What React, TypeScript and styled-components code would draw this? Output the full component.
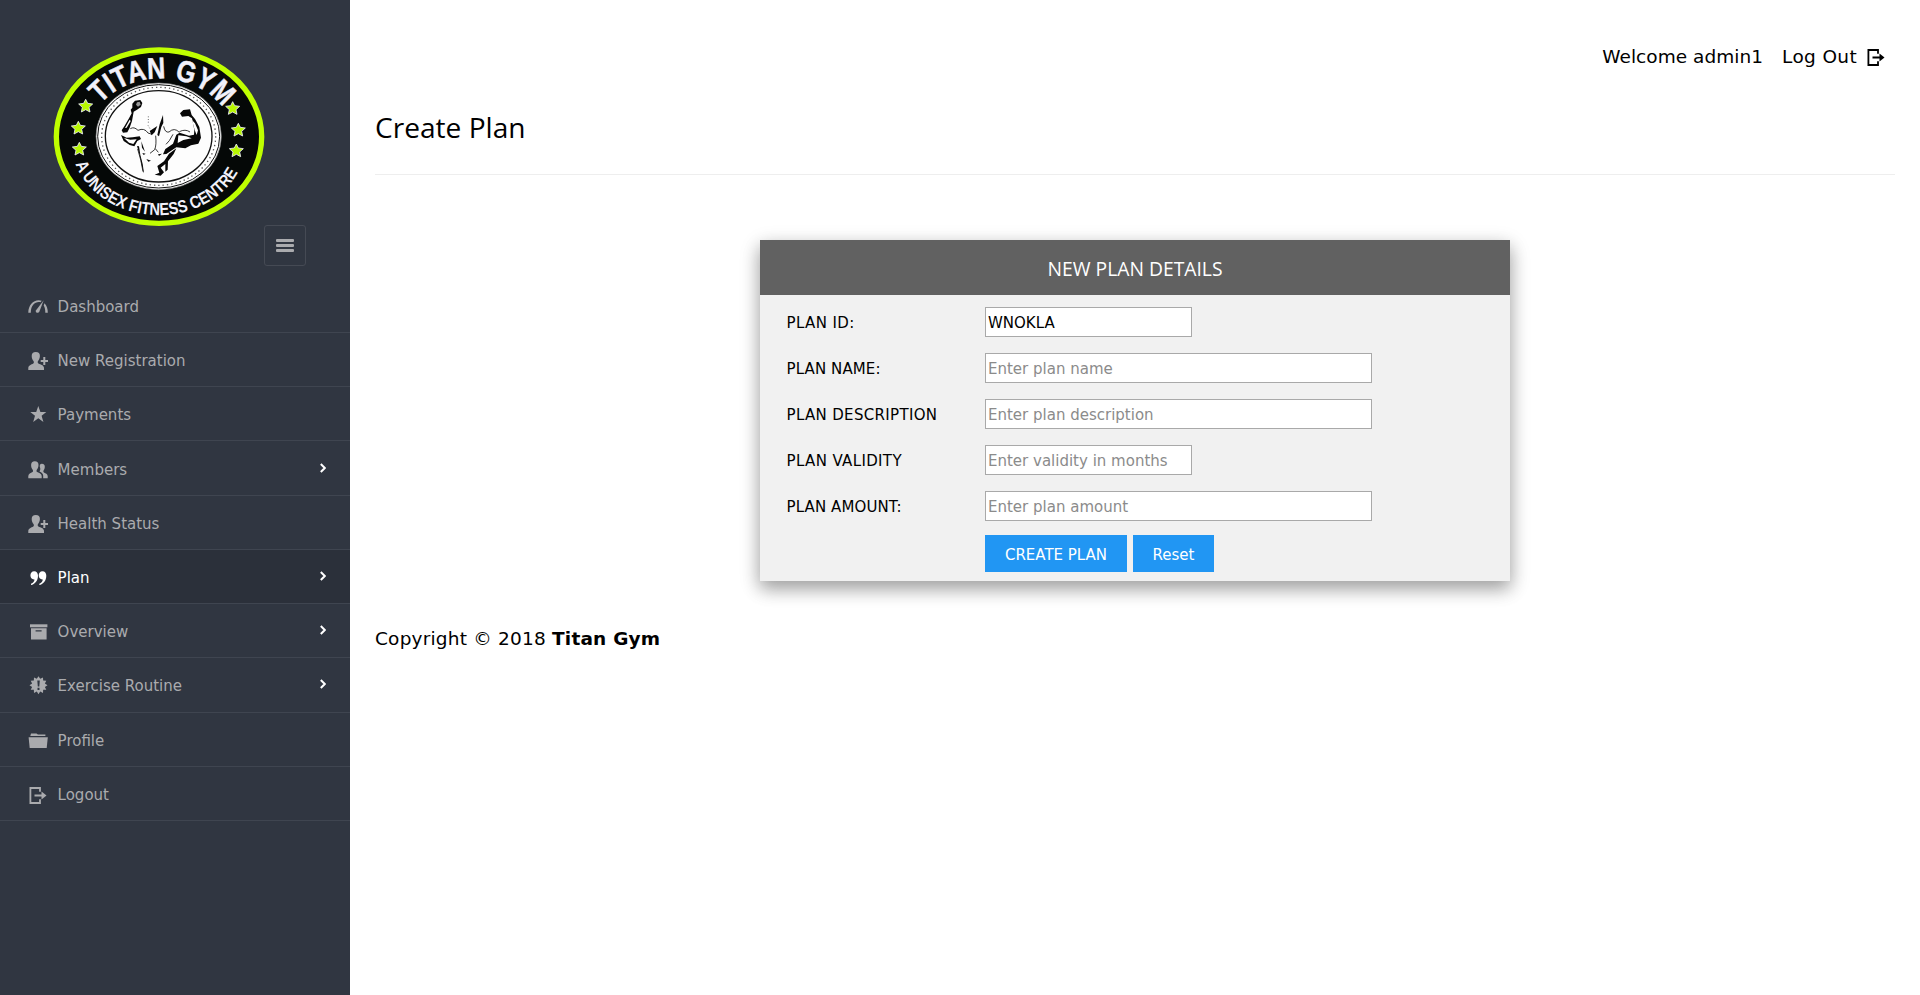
import React from 'react';
import styled, { createGlobalStyle } from 'styled-components';

const GlobalStyle = createGlobalStyle`
  *, *::before, *::after { box-sizing: border-box; }
  body {
    margin: 0;
    background: #fff;
    color: #000;
    font-family: Verdana, 'DejaVu Sans', sans-serif;
    font-size: 15px;
  }
`;

const Page = styled.div`
  display: flex;
  min-height: 995px;
`;

const Sidebar = styled.aside`
  width: 350px;
  flex: none;
  background: #303641;
`;

const SidebarHeader = styled.header`
  display: flex;
  align-items: flex-start;
  height: 278.78px;
  padding: 45px 0 0 52px;
`;

const Logo = styled.svg`
  width: 212px;
  height: 183px;
  overflow: visible;
`;

const MenuToggle = styled.button`
  display: flex;
  flex-direction: column;
  align-items: center;
  justify-content: center;
  gap: 2px;
  width: 42px;
  height: 41px;
  margin: 180px 0 0;
  padding: 0;
  border: 1px solid #454a54;
  border-radius: 3px;
  background: transparent;
`;

const MenuBar = styled.span`
  width: 18px;
  height: 3px;
  border-radius: 1px;
  background: #aaabae;
`;

const Nav = styled.nav`
  display: flex;
  flex-direction: column;
`;

const NavItem = styled.a<{ $active?: boolean }>`
  display: flex;
  align-items: center;
  height: 54.22px;
  padding: 3px 24px 0 28px;
  border-bottom: 1px solid #3f4550;
  background: ${(p) => (p.$active ? '#2b303a' : 'transparent')};
  color: ${(p) => (p.$active ? '#fff' : '#aaabae')};
`;

const NavLabel = styled.span`
  flex: 1;
  margin-left: 9.6px;
`;

const NavIcon = styled.svg`
  width: 20px;
  height: 20px;
  flex: none;
  fill: currentColor;
`;

const Chevron = styled.svg`
  width: 6px;
  height: 10px;
  margin-bottom: 4px;
  fill: none;
  stroke: #fff;
  stroke-width: 2;
`;

const Main = styled.main`
  flex: 1;
  padding: 0 25px;
`;

const TopBar = styled.div`
  display: flex;
  justify-content: flex-end;
  align-items: center;
  height: 74px;
  padding: 40px 9px 0 0;
  font-size: 18.5px;
  line-height: 34px;
`;

const Welcome = styled.span`
  margin-right: 19px;
  letter-spacing: 0.04px;
`;

const LogoutLink = styled.a`
  display: flex;
  align-items: center;
  gap: 9px;
  letter-spacing: 0.35px;
`;

const PageTitle = styled.h3`
  height: 101px;
  margin: 0;
  padding-top: 33px;
  border-bottom: 1px solid #eee;
  font: 400 28.1px/40px 'Segoe UI', 'Open Sans', sans-serif;
`;

const Card = styled.section`
  width: 750px;
  height: 341px;
  margin: 65px auto 0;
  background: #f1f1f1;
  box-shadow: 0 8px 16px rgba(0, 0, 0, 0.24), 0 6px 20px rgba(0, 0, 0, 0.2);
`;

const CardHeader = styled.h4`
  height: 55px;
  margin: 0;
  padding-top: 1px;
  background: #616161;
  color: #fff;
  font: 400 19.3px/56px 'Segoe UI', 'Open Sans', sans-serif;
  text-align: center;
`;

const Form = styled.form`
  display: flex;
  flex-direction: column;
  gap: 16px;
  padding: 12px 26px 0;
`;

const Field = styled.label`
  display: flex;
  align-items: center;
  height: 30px;
`;

const FieldLabel = styled.span<{ $spacing: number }>`
  width: 199px;
  padding: 2px 0 0 0.6px;
  letter-spacing: ${(p) => p.$spacing}px;
`;

const Input = styled.input<{ $wide?: boolean }>`
  width: ${(p) => (p.$wide ? 387 : 207)}px;
  height: 30px;
  padding: 2px 2px 0;
  border: 1px solid #a9a9a9;
  border-radius: 0;
  outline: none;
  background: #fff;
  color: #000;
  font: inherit;
  &::placeholder { color: #8b8b8b; opacity: 1; }
`;

const Actions = styled.div`
  display: flex;
  gap: 6px;
  margin: -2px 0 0 199px;
`;

const Button = styled.button<{ $width: number }>`
  width: ${(p) => p.$width}px;
  height: 37px;
  padding: 2px 0 0;
  border: 0;
  background: #2196f3;
  color: #fff;
  font: inherit;
`;

const Footer = styled.footer`
  margin-top: 41px;
  font-size: 18.5px;
  line-height: 33px;
  letter-spacing: 0.2px;
`;

const LogoutGlyph = () => (
  <>
    <path d="M12 6.8V3H2.4v15H12v-3.800" fill="none" stroke="currentColor" strokeWidth="1.800" />
    <path d="M6.500 9.400h7V6.600l5 3.900-5 3.900v-2.800h-7z" />
  </>
);

const UserPlusGlyph = () => (
  <>
    <path d="M7.8 1c2.800 0 4.200 1.600 4.100 4-.1 2.700-1.100 3.900-1.900 5.100-.5.8-.4 2 .4 2.400 2.400 1.100 5.400 1.700 5.600 4.300V19H.3v-2.200c.2-2.500 2.900-3 5-4.300.8-.5.7-1.600.2-2.400C4.700 8.900 3.700 7.600 3.700 5 3.700 2.600 5 1 7.800 1z" />
    <path d="M15.300 6h2v3h2.700v2h-2.700v3.100h-2V11h-2.600V9h2.600z" />
  </>
);

/** Outline of the twelve-pointed seal behind the exclamation mark. */
const burstOutline = `M${Array.from({ length: 24 }, (_, i) => {
  const radius = i % 2 === 0 ? 9 : 6.6;
  const angle = (i * Math.PI) / 12;
  return `${(10.5 + radius * Math.sin(angle)).toFixed(2)} ${(9.2 - radius * Math.cos(angle)).toFixed(2)}`;
}).join('L')}Z`;

const glyphs: Record<string, React.ReactNode> = {
  gauge: (
    <>
      <path d="M.3 15.800C.3 8.200 5 3.200 10.600 3.200c1.300 0 2.200.2 3.100.6l-1.100 1.500C7.500 4.200 2.800 8 2.800 15.800z" />
      <path d="M15.700 3.200 11.300 14.800c-.9 1.900-4.300.8-3.400-1.400z" />
      <path d="M16.500 6.200c2.400 2.300 3.300 5.600 3.300 9.600h-2.500c0-3.200-.4-5.200-1.600-7.300z" />
    </>
  ),
  userPlus: <UserPlusGlyph />,
  star: <path d="m10.300 1 2.100 6h5.900l-4.700 3.700 1.800 6.300-5.100-3.700L5.200 17 7 10.700 2.300 7h5.900z" />,
  users: (
    <>
      <path d="M6.800 1.200c2.500 0 3.800 1.500 3.700 3.800-.1 2.500-1 3.700-1.700 4.800-.5.8-.4 1.900.4 2.300 2.200 1 4.300 1.700 4.500 4V18.200H.3v-2.100c.2-2.400 2.400-2.800 4.200-4 .8-.5.7-1.500.2-2.300C4 8.700 3.100 7.500 3.100 5c0-2.300 1.200-3.800 3.700-3.800z" />
      <path d="M13.900 3.700c2.100 0 3 1.300 2.900 3.100 0 1.900-.7 2.900-1.200 3.800-.4.7-.3 1.500.3 1.900 1.800.9 3.600 1.500 3.800 3.400v2.300h-4.500v-2.500c-.2-2-1.400-3.100-3.700-4.100.8-1.500 1-2.400.6-3.800-.8-2.200-.3-4.100 1.800-4.100z" />
    </>
  ),
  quote: (
    <path d="M6.100 3.200c2.500 0 3.900 1.800 3.900 4.500 0 5-3.200 8.600-7 9.300v-1.300c2.200-1 3.400-2.600 3.500-4.300-2.500.3-4.100-1.600-4.100-4.100 0-2.300 1.500-4.100 3.700-4.100zm8.300 0c2.500 0 3.900 1.800 3.900 4.500 0 5-3.200 8.600-7 9.300v-1.300c2.200-1 3.400-2.600 3.500-4.300-2.500.3-4.100-1.600-4.100-4.100 0-2.300 1.500-4.100 3.700-4.100z" />
  ),
  archive: (
    <>
      <path d="M2 2.300h17.400v3H2z" />
      <path fillRule="evenodd" d="M3 6.300h15.600v11.200H3zm4.600 2v1.300h6V8.300z" />
    </>
  ),
  burst: <path fillRule="evenodd" d={`${burstOutline}M9.300 4.500l.5 6h1.500l.5-6zM9.500 11.700v2.200h2v-2.200z`} />,
  folder: (
    <>
      <path d="M2.300 5.100 3 2.400h5.500l1.400 1.200h7.500v1.500z" />
      <path d="M.6 6.300h19.200L18.700 17H1.700z" />
    </>
  ),
  logout: <LogoutGlyph />,
};

interface NavEntry {
  label: string;
  icon: string;
  expandable?: boolean;
  active?: boolean;
}

const navEntries: NavEntry[] = [
  { label: 'Dashboard', icon: 'gauge' },
  { label: 'New Registration', icon: 'userPlus' },
  { label: 'Payments', icon: 'star' },
  { label: 'Members', icon: 'users', expandable: true },
  { label: 'Health Status', icon: 'userPlus' },
  { label: 'Plan', icon: 'quote', expandable: true, active: true },
  { label: 'Overview', icon: 'archive', expandable: true },
  { label: 'Exercise Routine', icon: 'burst', expandable: true },
  { label: 'Profile', icon: 'folder' },
  { label: 'Logout', icon: 'logout' },
];

const badgeStars = [
  [137, 227],
  [115, 293],
  [118, 356],
  [578, 234],
  [595, 299],
  [589, 361],
];

const GymLogo = () => (
  <Logo viewBox="36 45 636 549" role="img" aria-label="Titan Gym">
    <defs>
      <path id="arcTop" d="M182 222A216 174 0 0 1 546 230" />
      <path id="arcBottom" d="M106 402A264 226 0 0 0 606 402" />
    </defs>
    <ellipse cx="357" cy="320" rx="308" ry="260" fill="#050807" stroke="#bfff00" strokeWidth="16" />
    <ellipse cx="356" cy="319" rx="188" ry="160" fill="#fff" stroke="#777" strokeWidth="2" />
    <ellipse cx="356" cy="319" rx="183" ry="155" fill="none" stroke="#111" strokeWidth="3" />
    <ellipse cx="356" cy="319" rx="171" ry="147" fill="none" stroke="#555" strokeWidth="4" strokeDasharray="4 9" />
    <ellipse cx="356" cy="319" rx="160" ry="137" fill="#fdfdfd" stroke="#111" strokeWidth="4" />
    <g fontFamily="'Liberation Sans', Arial, sans-serif" fontWeight="700" fill="#f1f1fa">
      <text fontSize="90" wordSpacing="6" stroke="#f1f1fa" strokeWidth="1.500">
        <textPath href="#arcTop" textLength="414" lengthAdjust="spacingAndGlyphs">TITAN GYM</textPath>
      </text>
      <text fontSize="52">
        <textPath href="#arcBottom" textLength="594" lengthAdjust="spacingAndGlyphs">A UNISEX FITNESS CENTRE</textPath>
      </text>
    </g>
    {badgeStars.map(([x, y]) => (
      <path
        key={`${x}-${y}`}
        transform={`translate(${x} ${y})`}
        d="M0-19 6-7 21-5 10 5 13 19 0 12-13 19-10 5-21-5-6-7z"
        fill="#b8f800"
        stroke="#eef"
        strokeWidth="2.500"
      />
    ))}
    <g transform="translate(225 195)" fill="#080808">
      <path d="M52 26 60 17 76 15 82 24 78 36 66 44 56 50 51 78 44 98 37 112 24 113 20 106 29 92 42 70 50 55 47 44 52 38z" />
      <path d="M66 22 74 20 77 29 69 35 63 29z" fill="#999" />
      <path d="M44 74 47 78 35 98 30 99z" fill="#fff" />
      <path d="M18 120 35 128 53 127 74 124 78 132 67 138 58 154 44 150 26 138z" />
      <path d="M27 129 46 134 65 133 55 147 42 143z" fill="#fff" />
      <path d="M195 55 205 45 225 43 230 60 240 72 253 96 258 128 250 146 228 151 211 160 184 157 154 177 144 178 151 162 174 146 184 119 194 113 222 122 237 119 238 104 231 70 220 63 201 65z" />
      <path d="M231 75 240 85 249 106 245 120 239 105zM190 121 214 124 230 130 205 135 188 144z" fill="#fff" />
      <path d="M134 88 144 60 145 84 139 96 132 124 127 120zM104 108 127 93 119 112 110 121z" />
      <path d="M162 176 184 160 176 177 159 199 158 224 151 230 151 207 137 218 147 232 137 242 119 239 133 233 127 213 147 199z" />
      <path d="M66 153 73 178 84 229 87 235 83 207 76 180 72 154zM79 139 90 170 81 158zM82 174 92 176 86 180zM94 192 108 197 100 200zM129 178 141 176 132 183z" />
      <path
        d="M46 101Q57 94 69 106Q88 97 99 114L111 118M146 94Q150 114 162 111Q178 96 193 112M193 110Q211 101 225 111M122 122Q125 150 119 164L105 175M121 161 130 172M68 162Q79 196 84 230M174 118 163 137 153 148"
        fill="none"
        stroke="#111"
        strokeWidth="2.500"
      />
      <path d="M100 64V85M99 91 105 101" fill="none" stroke="#222" strokeWidth="2" strokeDasharray="3 5" />
    </g>
  </Logo>
);

const fields = [
  { label: 'PLAN ID:', spacing: 0.38, value: 'WNOKLA' },
  { label: 'PLAN NAME:', spacing: 0.1, placeholder: 'Enter plan name', wide: true },
  { label: 'PLAN DESCRIPTION', spacing: 0.33, placeholder: 'Enter plan description', wide: true },
  { label: 'PLAN VALIDITY', spacing: 0.36, placeholder: 'Enter validity in months' },
  { label: 'PLAN AMOUNT:', spacing: 0.1, placeholder: 'Enter plan amount', wide: true },
];

export default function App() {
  return (
    <Page>
      <GlobalStyle />
      <Sidebar>
        <SidebarHeader>
          <GymLogo />
          <MenuToggle type="button" aria-label="Toggle menu">
            <MenuBar />
            <MenuBar />
            <MenuBar />
          </MenuToggle>
        </SidebarHeader>
        <Nav>
          {navEntries.map((entry) => (
            <NavItem key={entry.label} $active={entry.active}>
              <NavIcon viewBox="0 0 20 20">{glyphs[entry.icon]}</NavIcon>
              <NavLabel>{entry.label}</NavLabel>
              {entry.expandable && (
                <Chevron viewBox="0 0 6 10">
                  <path d="M.8 1 4.800 5 .8 9" />
                </Chevron>
              )}
            </NavItem>
          ))}
        </Nav>
      </Sidebar>
      <Main>
        <TopBar>
          <Welcome>Welcome admin1</Welcome>
          <LogoutLink>
            Log Out
            <NavIcon viewBox="0 0 20 20">
              <LogoutGlyph />
            </NavIcon>
          </LogoutLink>
        </TopBar>
        <PageTitle>Create Plan</PageTitle>
        <Card>
          <CardHeader>NEW PLAN DETAILS</CardHeader>
          <Form>
            {fields.map((field) => (
              <Field key={field.label}>
                <FieldLabel $spacing={field.spacing}>{field.label}</FieldLabel>
                <Input $wide={field.wide} defaultValue={field.value} placeholder={field.placeholder} />
              </Field>
            ))}
            <Actions>
              <Button type="button" $width={142}>CREATE PLAN</Button>
              <Button type="reset" $width={81}>Reset</Button>
            </Actions>
          </Form>
        </Card>
        <Footer>
          Copyright © 2018 <strong>Titan Gym</strong>
        </Footer>
      </Main>
    </Page>
  );
}
